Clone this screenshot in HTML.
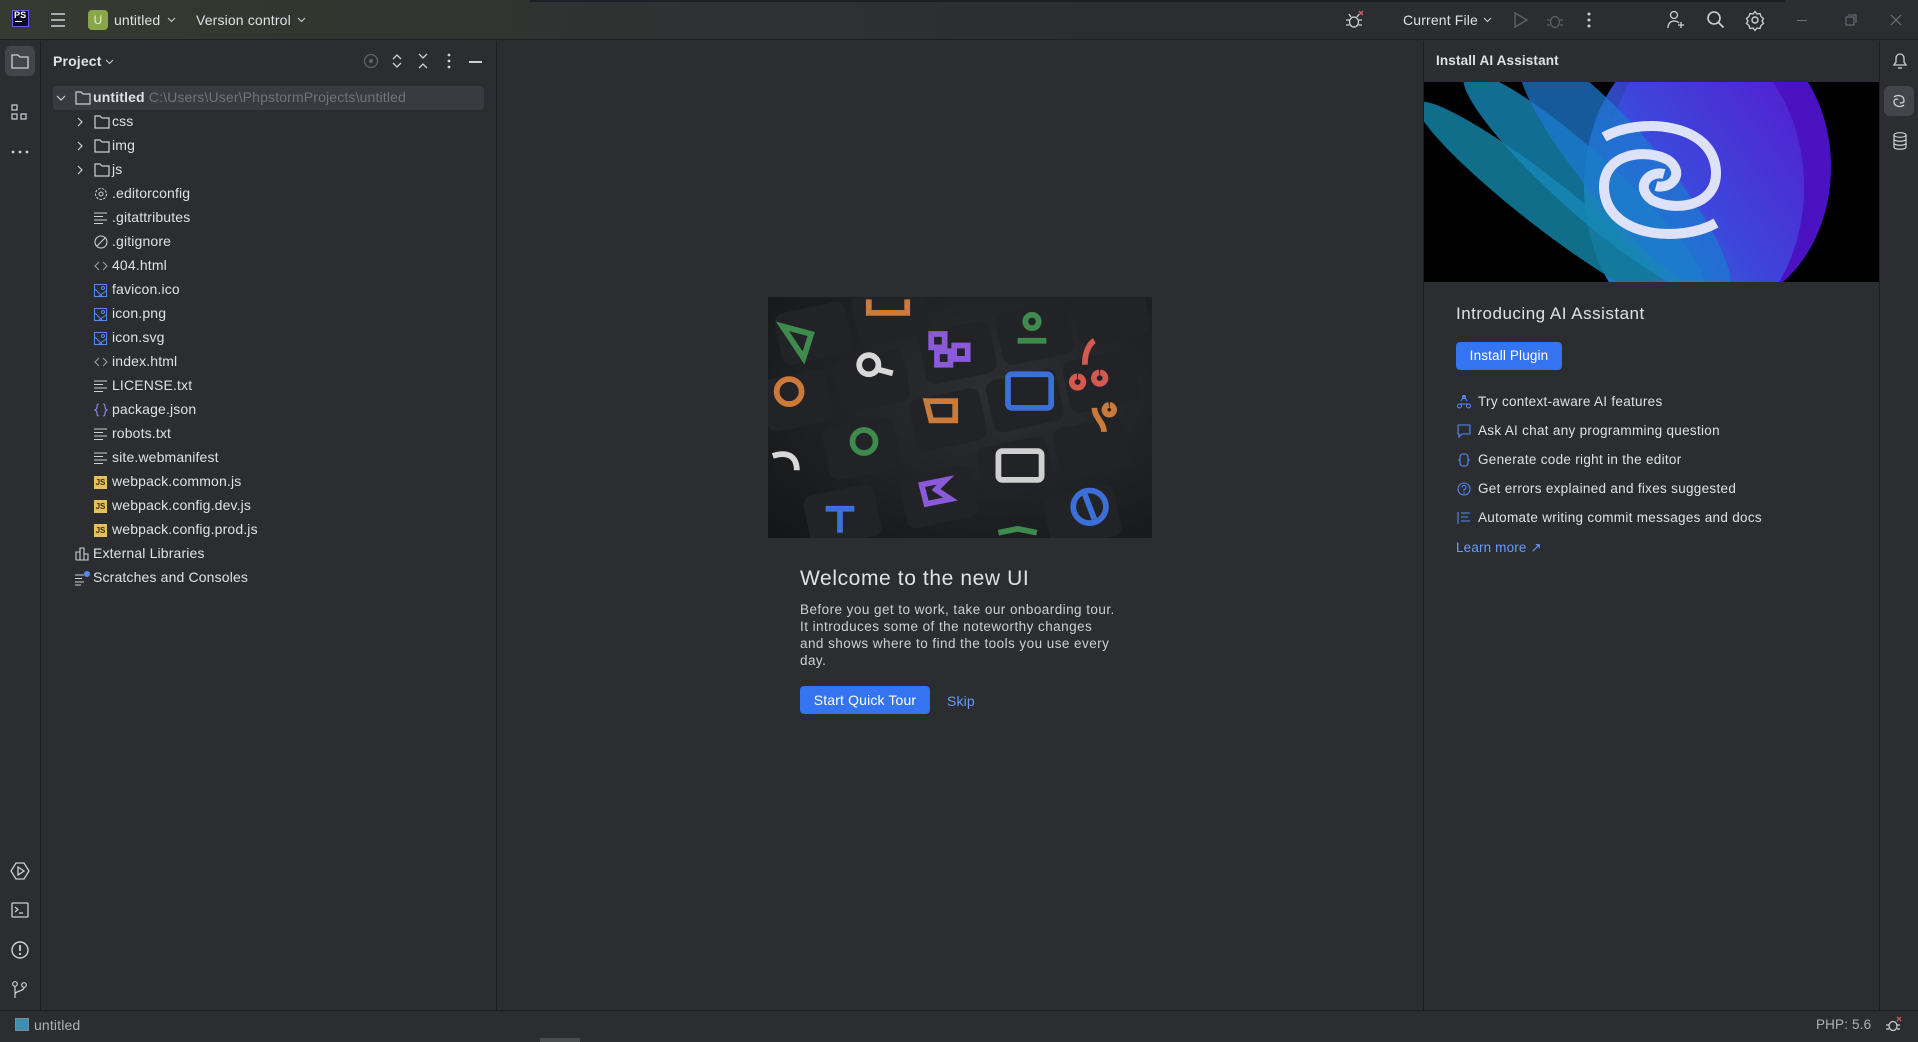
<!DOCTYPE html>
<html><head><meta charset="utf-8"><style>
*{margin:0;padding:0;box-sizing:border-box}
body{width:1918px;height:1042px;background:#2b2d30;font-family:"Liberation Sans",sans-serif;color:#dfe1e5;position:relative;overflow:hidden;font-size:14px;letter-spacing:0.15px}
.abs{position:absolute}
svg{position:absolute;overflow:visible}
.t{position:absolute;white-space:nowrap}
</style></head><body>
<div class="abs" style="left:0;top:0;width:1918px;height:40px;background:linear-gradient(90deg,#363a33 0,#33362f 300px,#2f3133 700px,#2b2d30 1100px);border-bottom:1px solid #1e1f22"></div>
<div class="abs" style="left:530px;top:0;width:1255px;height:2px;background:#1e1f22"></div>
<div class="abs" style="left:12px;top:10px;width:17px;height:17px;background:#0b0b24;border:1px solid #6a5cf0"></div>
<div class="t" style="left:14px;top:10px;font-size:9px;font-weight:bold;color:#fff">PS</div>
<div class="abs" style="left:15px;top:21px;width:7px;height:1px;background:#fff"></div>
<svg style="left:50px;top:12px" width="16" height="16"><path d="M1 2h14M1 8h14M1 14h14" stroke="#ced0d6" stroke-width="1.5"/></svg>
<div class="abs" style="left:88px;top:10px;width:20px;height:20px;background:#8aa64a;border-radius:4px;color:#e6eed2;font-size:12px;text-align:center;line-height:20px">U</div>
<div class="t" style="left:114px;top:12px;color:#dfe1e5">untitled</div>
<svg style="left:167px;top:17px" width="9" height="6"><path d="M1 1l3.5 3.5L8 1" stroke="#ced0d6" fill="none"/></svg>
<div class="t" style="left:196px;top:12px;color:#dfe1e5">Version control</div>
<svg style="left:297px;top:17px" width="9" height="6"><path d="M1 1l3.5 3.5L8 1" stroke="#ced0d6" fill="none"/></svg>
<svg style="left:1346px;top:11px" width="18" height="18"><ellipse cx="8" cy="11" rx="4.5" ry="5" fill="none" stroke="#ced0d6" stroke-width="1.3"/><path d="M0 9h3.5M12.5 9h3.5M0 14h3.5M12.5 14h3.5M3 3l2 3M13 3l-2 3" stroke="#ced0d6" stroke-width="1.3"/><path d="M13 0l4 4M17 0l-4 4" stroke="#e55765" stroke-width="1.4"/></svg>
<div class="t" style="left:1403px;top:12px">Current File</div>
<svg style="left:1483px;top:17px" width="9" height="6"><path d="M1 1l3.5 3.5L8 1" stroke="#ced0d6" fill="none"/></svg>
<svg style="left:1514px;top:12px" width="14" height="16"><path d="M1 1l12 7-12 7z" fill="none" stroke="#5f6166" stroke-width="1.4"/></svg>
<svg style="left:1547px;top:11px" width="16" height="18"><ellipse cx="8" cy="11" rx="4.5" ry="5.5" fill="none" stroke="#5f6166" stroke-width="1.3"/><path d="M0 9h3M13 9h3M0 14h3M13 14h3" stroke="#5f6166" stroke-width="1.3"/></svg>
<svg style="left:1587px;top:12px" width="4" height="16"><circle cx="2" cy="2" r="1.5" fill="#ced0d6"/><circle cx="2" cy="8" r="1.5" fill="#ced0d6"/><circle cx="2" cy="14" r="1.5" fill="#ced0d6"/></svg>
<svg style="left:1667px;top:10px" width="18" height="20"><circle cx="7" cy="5" r="3.5" fill="none" stroke="#ced0d6" stroke-width="1.3"/><path d="M1 18c0-5 3-7 6-7s4 1 5 2M14 12v6M11 15h6" fill="none" stroke="#ced0d6" stroke-width="1.3"/></svg>
<svg style="left:1706px;top:10px" width="20" height="20"><circle cx="8" cy="8" r="6" fill="none" stroke="#ced0d6" stroke-width="1.6"/><path d="M12.5 12.5l5 5" stroke="#ced0d6" stroke-width="1.8"/></svg>
<svg style="left:1745px;top:10px" width="20" height="20"><circle cx="10" cy="10" r="3" fill="none" stroke="#ced0d6" stroke-width="1.4"/><path d="M10 1.5l2 2.5 3-0.5 1 3 2.5 2-1.5 2.5 1.5 2.5-2.5 2-1 3-3-.5-2 2.5-2-2.5-3 .5-1-3-2.5-2 1.5-2.5-1.5-2.5 2.5-2 1-3 3 .5z" fill="none" stroke="#ced0d6" stroke-width="1.3"/></svg>
<div class="abs" style="left:1797px;top:20px;width:10px;height:1px;background:#6f7277"></div>
<svg style="left:1845px;top:14px" width="12" height="12"><rect x="1" y="3" width="8" height="8" fill="none" stroke="#6f7277"/><path d="M3 1h8v8" fill="none" stroke="#6f7277"/></svg>
<svg style="left:1890px;top:14px" width="12" height="12"><path d="M1 1l10 10M11 1L1 11" stroke="#6f7277" stroke-width="1.2"/></svg>
<div class="abs" style="left:40px;top:41px;width:1px;height:969px;background:#1e1f22"></div>
<div class="abs" style="left:5px;top:46px;width:30px;height:30px;background:#43454a;border-radius:6px"></div>
<svg style="left:11px;top:53px" width="18" height="16"><path d="M1 2h6l2 2h8v11H1z" fill="none" stroke="#ced0d6" stroke-width="1.3"/></svg>
<svg style="left:11px;top:104px" width="18" height="18"><rect x="1" y="1" width="5" height="5" fill="none" stroke="#ced0d6" stroke-width="1.2"/><rect x="1" y="10" width="5" height="5" fill="none" stroke="#ced0d6" stroke-width="1.2"/><rect x="10" y="10" width="5" height="5" fill="none" stroke="#ced0d6" stroke-width="1.2"/></svg>
<svg style="left:11px;top:150px" width="18" height="4"><circle cx="2" cy="2" r="1.4" fill="#ced0d6"/><circle cx="9" cy="2" r="1.4" fill="#ced0d6"/><circle cx="16" cy="2" r="1.4" fill="#ced0d6"/></svg>
<svg style="left:10px;top:861px" width="20" height="20"><path d="M6 2h8l5 8-5 8H6l-5-8z" fill="none" stroke="#ced0d6" stroke-width="1.3"/><path d="M8 6l6 4-6 4z" fill="none" stroke="#ced0d6" stroke-width="1.3"/></svg>
<svg style="left:11px;top:902px" width="18" height="16"><rect x="1" y="1" width="16" height="14" rx="1" fill="none" stroke="#ced0d6" stroke-width="1.3"/><path d="M4 5l3 2.5-3 2.5M8 11h4" fill="none" stroke="#ced0d6" stroke-width="1.2"/></svg>
<svg style="left:10px;top:940px" width="20" height="20"><circle cx="10" cy="10" r="8" fill="none" stroke="#ced0d6" stroke-width="1.4"/><path d="M10 5v6" stroke="#ced0d6" stroke-width="1.8"/><circle cx="10" cy="14" r="1.1" fill="#ced0d6"/></svg>
<svg style="left:12px;top:981px" width="16" height="18"><circle cx="3" cy="3" r="2.3" fill="none" stroke="#ced0d6" stroke-width="1.2"/><circle cx="12" cy="4" r="2.3" fill="none" stroke="#ced0d6" stroke-width="1.2"/><path d="M3 5.5V17M12 6.5c0 4-9 3-9 7" fill="none" stroke="#ced0d6" stroke-width="1.2"/></svg>
<div class="abs" style="left:496px;top:41px;width:1px;height:969px;background:#1e1f22"></div>
<div class="t" style="left:53px;top:53px;font-weight:bold;font-size:14px">Project</div>
<svg style="left:105px;top:59px" width="9" height="6"><path d="M1 1l3.5 3.5L8 1" stroke="#ced0d6" fill="none"/></svg>
<svg style="left:363px;top:53px" width="16" height="16"><circle cx="8" cy="8" r="6.5" fill="none" stroke="#5f6166" stroke-width="1.3"/><circle cx="8" cy="8" r="2" fill="#5f6166"/></svg>
<svg style="left:392px;top:53px" width="10" height="16"><path d="M1 6l4-4 4 4M1 10l4 4 4-4" fill="none" stroke="#ced0d6" stroke-width="1.3"/></svg>
<svg style="left:418px;top:53px" width="10" height="16"><path d="M1 1l4 4 4-4M1 15l4-4 4 4" fill="none" stroke="#ced0d6" stroke-width="1.3"/></svg>
<svg style="left:447px;top:53px" width="4" height="16"><circle cx="2" cy="2" r="1.4" fill="#ced0d6"/><circle cx="2" cy="8" r="1.4" fill="#ced0d6"/><circle cx="2" cy="14" r="1.4" fill="#ced0d6"/></svg>
<div class="abs" style="left:469px;top:61px;width:13px;height:1.5px;background:#ced0d6"></div>
<div class="abs" style="left:53px;top:86px;width:431px;height:24px;background:#393b40;border-radius:4px"></div>
<div id="tree"></div>
<div class="abs" style="left:497px;top:41px;width:926px;height:969px;background:#2b2d30"></div>
<div class="abs" style="left:768px;top:297px;width:384px;height:241px;background:radial-gradient(ellipse at 60% 40%,#2e2f33,#141516);overflow:hidden">
<svg style="left:0;top:0" width="384" height="241" viewBox="0 0 400 250">
<g fill="#222326">
<rect x="10" y="10" width="75" height="55" rx="10" transform="rotate(-12 47 37)"/>
<rect x="90" y="-10" width="75" height="55" rx="10" transform="rotate(-12 127 17)"/>
<rect x="160" y="30" width="75" height="55" rx="10" transform="rotate(-12 197 57)"/>
<rect x="240" y="10" width="75" height="55" rx="10" transform="rotate(-12 277 37)"/>
<rect x="320" y="-10" width="75" height="55" rx="10" transform="rotate(-12 357 17)"/>
<rect x="70" y="60" width="75" height="55" rx="10" transform="rotate(-12 107 87)"/>
<rect x="230" y="80" width="75" height="55" rx="10" transform="rotate(-12 267 107)"/>
<rect x="310" y="60" width="75" height="55" rx="10" transform="rotate(-12 347 87)"/>
<rect x="-5" y="80" width="70" height="55" rx="10" transform="rotate(-12 30 107)"/>
<rect x="150" y="100" width="75" height="55" rx="10" transform="rotate(-12 187 127)"/>
<rect x="60" y="130" width="75" height="55" rx="10" transform="rotate(-12 97 157)"/>
<rect x="300" y="130" width="75" height="55" rx="10" transform="rotate(-12 337 157)"/>
<rect x="220" y="150" width="75" height="55" rx="10" transform="rotate(-12 257 177)"/>
<rect x="140" y="180" width="75" height="55" rx="10" transform="rotate(-12 177 207)"/>
<rect x="40" y="200" width="75" height="55" rx="10" transform="rotate(-12 77 227)"/>
<rect x="290" y="200" width="75" height="55" rx="10" transform="rotate(-12 327 227)"/>
</g>
<g fill="none" stroke-width="6">
<path d="M15 30l30 8-8 25z" stroke="#3f8a4d"/>
<path d="M105 2v14h40V2" stroke="#cc7a3a"/>
<path d="M170 38h14v14h-14zM176 56h14v14h-14zM194 50h14v14h-14z" stroke="#8a5ad8"/>
<circle cx="275" cy="25" r="7" stroke="#3f8a4d"/><path d="M260 45h30" stroke="#3f8a4d"/>
<circle cx="105" cy="70" r="10" stroke="#d8d8d8"/><path d="M115 75l15 4" stroke="#d8d8d8"/>
<path d="M330 70c0-20 10-25 10-25M322 82a6 6 0 1 0 1 0M345 78a6 6 0 1 0 1 0" stroke="#d25a50"/>
<circle cx="22" cy="98" r="13" stroke="#cc7a3a"/>
<rect x="250" y="80" width="45" height="35" rx="4" stroke="#3c6fd8"/>
<path d="M165 108h30v20h-25z" stroke="#cc7a3a"/>
<path d="M340 115c0 10 10 15 10 25M355 112a5 5 0 1 0 1 0" stroke="#cc7a3a"/>
<circle cx="100" cy="150" r="12" stroke="#3f8a4d"/>
<rect x="240" y="160" width="45" height="30" rx="4" stroke="#d0d0d0"/>
<path d="M5 165c15-5 25 0 25 15" stroke="#d8d8d8"/>
<path d="M160 195l25-5-10 10 15 10-25 5z" stroke="#8a5ad8"/>
<path d="M60 220h30M75 220v25" stroke="#3c6fd8"/>
<circle cx="335" cy="218" r="17" stroke="#3c6fd8"/><path d="M330 205l10 26" stroke="#3c6fd8"/>
<path d="M240 245l20-4 20 4" stroke="#3f8a4d"/>
</g></svg></div>
<div class="t" style="left:800px;top:567px;font-size:21px;letter-spacing:0.6px;color:#dfe1e5">Welcome to the new UI</div>
<div class="abs" style="left:800px;top:601px;width:316px;font-size:13.5px;line-height:17px;letter-spacing:0.45px;color:#ced0d6">Before you get to work, take our onboarding tour. It introduces some of the noteworthy changes and shows where to find the tools you use every day.</div>
<div class="abs" style="left:800px;top:686px;width:130px;height:28px;background:#3574f0;border-radius:4px;color:#fff;font-size:14px;text-align:center;line-height:28px">Start Quick Tour</div>
<div class="t" style="left:947px;top:693px;color:#6b9bfa;font-size:14px">Skip</div>
<div class="abs" style="left:1423px;top:41px;width:1px;height:969px;background:#1e1f22"></div>
<div class="abs" style="left:1879px;top:41px;width:1px;height:969px;background:#1e1f22"></div>
<div class="t" style="left:1436px;top:53px;font-size:13.5px;font-weight:bold">Install AI Assistant</div>
<div class="abs" style="left:1424px;top:82px;width:455px;height:200px;background:#000;overflow:hidden">
<svg style="left:0;top:0" width="455" height="200">
<defs><linearGradient id="g" x1="0" y1="1" x2="1" y2="0"><stop offset="0" stop-color="#1aa8e0"/><stop offset=".5" stop-color="#3b4fe0"/><stop offset="1" stop-color="#5a18d0"/></linearGradient></defs>
<ellipse cx="295" cy="85" rx="112" ry="140" fill="#4a12c0"/>
<ellipse cx="270" cy="105" rx="110" ry="150" fill="url(#g)" opacity=".85"/>
<ellipse cx="120" cy="120" rx="160" ry="24" transform="rotate(38 120 120)" fill="#127a99" opacity=".9"/>
<ellipse cx="160" cy="100" rx="160" ry="30" transform="rotate(42 160 100)" fill="#1688b8" opacity=".8"/>
<ellipse cx="200" cy="90" rx="160" ry="38" transform="rotate(50 200 90)" fill="#1e78d0" opacity=".75"/>
<g fill="none" stroke="#dde2fa" stroke-width="10">
<path d="M180 55C215 35 290 40 292 90C293 125 250 130 228 118C210 105 225 88 240 92"/>
<path d="M180 55C215 35 290 40 292 90C293 125 250 130 228 118C210 105 225 88 240 92" transform="rotate(180 236 98)"/>
</g>
</svg></div>
<div class="t" style="left:1456px;top:304px;font-size:17px;letter-spacing:0.5px">Introducing AI Assistant</div>
<div class="abs" style="left:1456px;top:342px;width:106px;height:28px;background:#3574f0;border-radius:4px;color:#fff;font-size:13.5px;text-align:center;line-height:28px">Install Plugin</div>
<div id="ai"></div>
<div class="t" style="left:1456px;top:540px;color:#6b9bfa;font-size:13.5px">Learn more ↗</div>
<svg style="left:1892px;top:51px" width="16" height="19"><path d="M2 14h12l-2-3V7a4 4 0 0 0-8 0v4z" fill="none" stroke="#ced0d6" stroke-width="1.3"/><path d="M6 17h4" stroke="#ced0d6" stroke-width="1.3"/></svg>
<div class="abs" style="left:1884px;top:86px;width:30px;height:30px;background:#43454a;border-radius:6px"></div>
<svg style="left:1891px;top:93px" width="16" height="16"><g fill="none" stroke="#ced0d6" stroke-width="1.3"><path d="M3 4C6 1.5 13 2 13 7.5C13 10 10 10.5 9 9.5"/><path d="M3 4C6 1.5 13 2 13 7.5C13 10 10 10.5 9 9.5" transform="rotate(180 8 8)"/></g></svg>
<svg style="left:1892px;top:132px" width="16" height="18"><ellipse cx="8" cy="3" rx="6" ry="2.3" fill="none" stroke="#ced0d6" stroke-width="1.2"/><path d="M2 3v12c0 3 12 3 12 0V3M2 7c0 3 12 3 12 0M2 11c0 3 12 3 12 0" fill="none" stroke="#ced0d6" stroke-width="1.2"/></svg>
<div class="abs" style="left:0;top:1010px;width:1918px;height:32px;background:#2b2d30;border-top:1px solid #1e1f22"></div>
<div class="abs" style="left:15px;top:1018px;width:14px;height:13px;background:#3d8fb0;border:1.5px solid #7c8a96"></div>
<div class="t" style="left:34px;top:1017px;color:#aeb1b6;font-size:14px">untitled</div>
<div class="t" style="left:1816px;top:1017px;color:#aeb1b6;font-size:13.5px">PHP: 5.6</div>
<svg style="left:1886px;top:1017px" width="16" height="16"><ellipse cx="7" cy="9" rx="4" ry="4.5" fill="none" stroke="#ced0d6" stroke-width="1.2"/><path d="M0 8h3M11 8h3M0 12h3M11 12h3" stroke="#ced0d6" stroke-width="1.2"/><path d="M11 0l4 4M15 0l-4 4" stroke="#c94f5b" stroke-width="1.3"/></svg>
<div class="abs" style="left:540px;top:1038px;width:40px;height:4px;background:#4a4c50"></div>
<script>
var rows=[
["untitled","f",0,1],["css","f",1,0],["img","f",1,0],["js","f",1,0],
[".editorconfig","gear"],[".gitattributes","txt"],[".gitignore","ign"],["404.html","html"],
["favicon.ico","img"],["icon.png","img"],["icon.svg","img"],["index.html","html"],
["LICENSE.txt","txt"],["package.json","json"],["robots.txt","txt"],["site.webmanifest","txt"],
["webpack.common.js","js"],["webpack.config.dev.js","js"],["webpack.config.prod.js","js"],
["External Libraries","lib"],["Scratches and Consoles","scr"]];
var h="";
rows.forEach(function(r,i){
 var cy=98+i*24, top=cy-9;
 var ix=94, tx=112, ic="";
 var t=r[1];
 if(t=="f"){
  if(r[2]==0){ix=75;tx=93;ic+='<svg style="left:56px;top:'+(cy-3)+'px" width="10" height="6"><path d="M1 1l4 4 4-4" stroke="#ced0d6" fill="none" stroke-width="1.2"/></svg>';}
  else{ix=94;tx=112;ic+='<svg style="left:77px;top:'+(cy-5)+'px" width="6" height="10"><path d="M1 1l4 4-4 4" stroke="#ced0d6" fill="none" stroke-width="1.2"/></svg>';}
  ic+='<svg style="left:'+ix+'px;top:'+(cy-7)+'px" width="16" height="14"><path d="M1 1h5l2 2h7v10H1z" fill="none" stroke="#ced0d6" stroke-width="1.2"/></svg>';
 } else if(t=="gear"){ic='<svg style="left:'+ix+'px;top:'+(cy-7)+'px" width="14" height="14"><circle cx="7" cy="7" r="2" fill="none" stroke="#ced0d6"/><circle cx="7" cy="7" r="5.5" fill="none" stroke="#ced0d6" stroke-dasharray="2.5 1.3"/></svg>';}
 else if(t=="txt"){ic='<svg style="left:'+ix+'px;top:'+(cy-6)+'px" width="14" height="12"><path d="M0 1h13M0 4.5h9M0 8h13M0 11.5h9" stroke="#ced0d6" stroke-width="1.1"/></svg>';}
 else if(t=="ign"){ic='<svg style="left:'+ix+'px;top:'+(cy-7)+'px" width="14" height="14"><circle cx="7" cy="7" r="6" fill="none" stroke="#ced0d6" stroke-width="1.1"/><path d="M3 11L11 3" stroke="#ced0d6" stroke-width="1.1"/></svg>';}
 else if(t=="html"){ic='<svg style="left:'+ix+'px;top:'+(cy-5)+'px" width="14" height="10"><path d="M5 1L1 5l4 4M9 1l4 4-4 4" fill="none" stroke="#9a9ea6" stroke-width="1.1"/></svg>';}
 else if(t=="img"){ic='<svg style="left:'+ix+'px;top:'+(cy-6)+'px" width="13" height="13"><rect x=".5" y=".5" width="12" height="12" fill="none" stroke="#548af7"/><path d="M1 5l7 7M5 12l7-5" stroke="#548af7"/><circle cx="9" cy="4" r="1.5" fill="none" stroke="#548af7"/></svg>';}
 else if(t=="json"){ic='<svg style="left:'+ix+'px;top:'+(cy-7)+'px" width="14" height="14"><path d="M5 1C3 1 3 2 3 4s-2 3-2 3 2 1 2 3 0 3 2 3M9 1c2 0 2 1 2 3s2 3 2 3-2 1-2 3 0 3-2 3" fill="none" stroke="#9b8ae6" stroke-width="1.1"/></svg>';}
 else if(t=="js"){ic='<div class="abs" style="left:'+ix+'px;top:'+(cy-6)+'px;width:13px;height:13px;background:#e8c05a;color:#3a2e10;font-size:8px;font-weight:bold;line-height:13px;text-align:center;letter-spacing:0">JS</div>';}
 else if(t=="lib"){ix=75;tx=93;ic='<svg style="left:'+ix+'px;top:'+(cy-7)+'px" width="14" height="14"><path d="M1 13V5h4v8M5 13V1h4v12M9 13V7h4v6H1" fill="none" stroke="#ced0d6" stroke-width="1.1"/></svg>';}
 else if(t=="scr"){ix=75;tx=93;ic='<svg style="left:'+ix+'px;top:'+(cy-7)+'px" width="16" height="14"><path d="M0 4h9M0 7.5h7M0 11h9M0 14h6" stroke="#ced0d6" stroke-width="1.1"/><circle cx="12" cy="3" r="3" fill="#548af7"/></svg>';}
 h+=ic+'<div class="t" style="left:'+tx+'px;top:'+top+'px;color:#dfe1e5;'+(i==0?'font-weight:bold':'')+'">'+r[0]+(i==0?' <span style="font-weight:normal;color:#6f737a">C:\\Users\\User\\PhpstormProjects\\untitled</span>':'')+'</div>';
});
document.getElementById('tree').outerHTML=h;
var ai=["Try context-aware AI features","Ask AI chat any programming question","Generate code right in the editor","Get errors explained and fixes suggested","Automate writing commit messages and docs"];
var icons=[
'<path d="M7 1l3 5M7 1L4 6M2 9h10" fill="none" stroke="#548af7" stroke-width="1.1"/><circle cx="2.5" cy="11" r="2" fill="none" stroke="#548af7"/><circle cx="11.5" cy="11" r="2" fill="none" stroke="#548af7"/><circle cx="7" cy="2" r="1.5" fill="none" stroke="#548af7"/>',
'<path d="M1 1h12v9H5l-3 3V10H1z" fill="none" stroke="#548af7" stroke-width="1.1"/>',
'<rect x="3" y="1" width="8" height="12" rx="3" fill="none" stroke="#548af7" stroke-width="1.1"/><path d="M1 7h2M11 7h2" stroke="#548af7"/>',
'<circle cx="7" cy="7" r="6" fill="none" stroke="#548af7" stroke-width="1.1"/><path d="M5 5.5a2 2 0 1 1 2 2v1.5" fill="none" stroke="#548af7"/><circle cx="7" cy="11" r=".8" fill="#548af7"/>',
'<path d="M1 1v12M4 2h9M4 6h7M4 10h9" stroke="#548af7" stroke-width="1.1"/>'];
var a="";
ai.forEach(function(s,i){var cy=402+i*29;
a+='<svg style="left:1457px;top:'+(cy-7)+'px" width="14" height="14">'+icons[i]+'</svg><div class="t" style="left:1478px;top:'+(cy-8)+'px;font-size:13.5px;letter-spacing:0.3px;color:#dfe1e5">'+s+'</div>';});
document.getElementById('ai').outerHTML=a;
</script>
</body></html>
